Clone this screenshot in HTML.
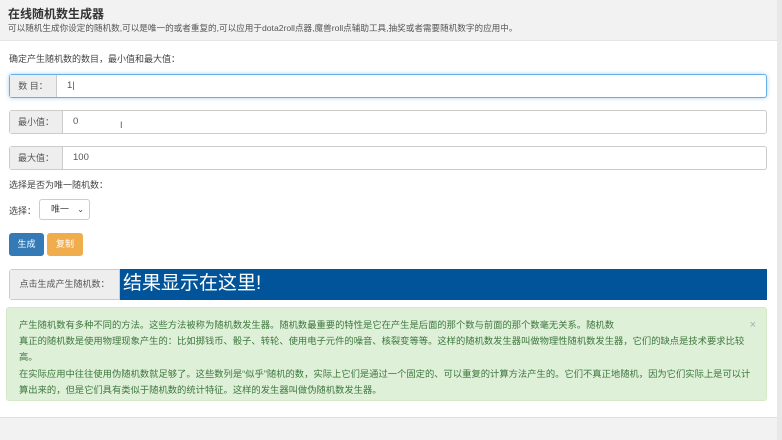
<!DOCTYPE html>
<html><head><meta charset="utf-8"><style>
*{box-sizing:border-box;margin:0;padding:0}
body{width:782px;height:440px;overflow:hidden;background:#fff;font-family:"Liberation Sans","Noto Sans CJK SC",sans-serif;color:#444;font-size:9px;position:relative}
.hd{position:absolute;left:0;top:0;width:777px;height:41px;background:#f2f2f2;border-bottom:1px solid #e4e4e4}
.hd h1{position:absolute;left:8px;top:5px;font-size:12px;font-weight:bold;color:#333}
.hd p{position:absolute;left:8px;top:22px;font-size:8.6px;color:#555}
.rb{position:absolute;left:777px;top:0;width:5px;height:440px;background:#e8e8e8}
.ab{position:absolute;}
.grp{position:absolute;left:9px;width:758px;height:24px;border:1px solid #ccc;border-radius:3px;background:#fff}
.grp .ad{position:absolute;left:0;top:0;bottom:0;background:#eee;border-right:1px solid #ccc;color:#555;font-size:9px;line-height:22px;text-align:center}
.grp .v{position:absolute;top:0;line-height:22px;font-size:9.5px;color:#555}
.btn{position:absolute;top:233px;height:23px;border-radius:3px;color:#fff;font-size:9px;line-height:23px;text-align:center}
.alert{position:absolute;left:6px;top:307px;width:761px;height:94px;background:#dff0d8;border:1px solid #d6e9c6;border-radius:3px;color:#3c763d;font-size:9.3px;padding:9px 8px 0 12px;line-height:16px}
.ft{position:absolute;left:0;top:417px;width:777px;height:23px;background:#f2f2f2;border-top:1px solid #e0e0e0}
</style></head><body>
<div class="hd"><h1>在线随机数生成器</h1><p>可以随机生成你设定的随机数,可以是唯一的或者重复的,可以应用于dota2roll点器,魔兽roll点辅助工具,抽奖或者需要随机数字的应用中。</p></div>
<div class="rb"></div>
<div class="ab" style="left:9px;top:52px">确定产生随机数的数目，最小值和最大值：</div>
<div class="grp" style="top:74px;border-color:#66afe9;box-shadow:0 0 4px rgba(102,175,233,.6)"><div class="ad" style="width:47px">数 目：</div><div class="v" style="left:57px">1|</div></div>
<div class="grp" style="top:110px"><div class="ad" style="width:53px">最小值：</div><div class="v" style="left:63px">0</div></div>
<div class="ab" style="left:120px;top:120px;color:#555">I</div>
<div class="grp" style="top:146px"><div class="ad" style="width:53px">最大值：</div><div class="v" style="left:63px">100</div></div>
<div class="ab" style="left:9px;top:178px">选择是否为唯一随机数：</div>
<div class="ab" style="left:9px;top:204px">选择：</div>
<div class="ab" style="left:39px;top:199px;width:51px;height:21px;border:1px solid #ccc;border-radius:3px;line-height:19px;padding-left:11px">唯一 <span style="position:absolute;right:5px;font-size:8px">⌄</span></div>
<div class="btn" style="left:9px;width:35px;background:#337ab7">生成</div>
<div class="btn" style="left:47px;width:36px;background:#f0ad4e">复制</div>
<div class="grp" style="top:269px;height:31px;border-color:#ccc"><div class="ad" style="width:110px;line-height:29px">点击生成产生随机数：</div><div style="position:absolute;left:110px;top:-1px;right:-1px;bottom:-1px;background:#02549a;color:#fff;font-size:19px;line-height:29px;padding-left:3px">结果显示在这里!</div></div>
<div class="alert"><span style="position:absolute;right:10px;top:9px;color:#aaa;font-size:11px">×</span>产生随机数有多种不同的方法。这些方法被称为随机数发生器。随机数最重要的特性是它在产生是后面的那个数与前面的那个数毫无关系。随机数<br>真正的随机数是使用物理现象产生的：比如掷钱币、骰子、转轮、使用电子元件的噪音、核裂变等等。这样的随机数发生器叫做物理性随机数发生器，它们的缺点是技术要求比较高。<br><span style="display:block;margin-top:1px">在实际应用中往往使用伪随机数就足够了。这些数列是“似乎”随机的数，实际上它们是通过一个固定的、可以重复的计算方法产生的。它们不真正地随机，因为它们实际上是可以计算出来的，但是它们具有类似于随机数的统计特征。这样的发生器叫做伪随机数发生器。</span></div>
<div class="ft"></div>
</body></html>
